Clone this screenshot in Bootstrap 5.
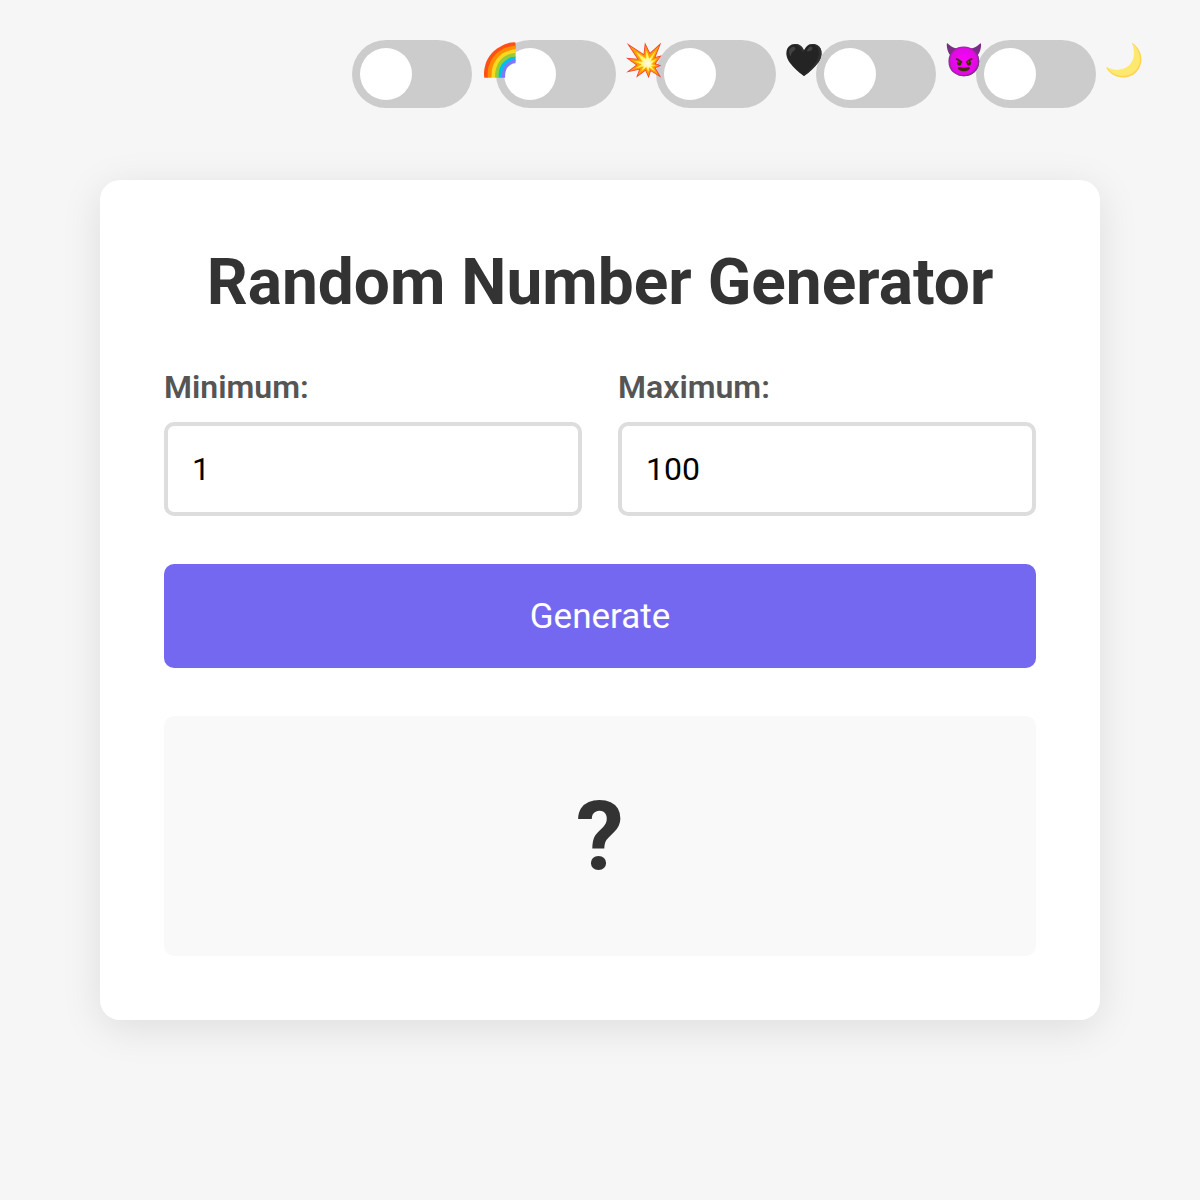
<!DOCTYPE html>
<html lang="en">
	<head>
		<meta charset="UTF-8" />
		<meta name="viewport" content="width=device-width, initial-scale=1.0" />
		<title>Random Number Generator</title>
		<link href="https://cdn.jsdelivr.net/npm/bootstrap@5.3.3/dist/css/bootstrap.min.css" rel="stylesheet" />
		<style>
			body {
				background-color: #f6f6f6;
				font-family: Roboto, "Liberation Sans", sans-serif;
				min-height: 1200px;
			}
			.theme-bar {
				padding: 40px 104px 72px 0;
				gap: 40px;
			}
			.theme-item {
				position: relative;
				width: 120px;
				height: 68px;
				border-radius: 34px;
				background-color: #ccc;
			}
			.theme-item.first-item {
				margin-right: -16px;
			}
			.theme-knob {
				width: 52px;
				height: 52px;
				margin: 8px;
				border-radius: 50%;
				background-color: #fff;
			}
			.theme-emoji {
				position: absolute;
				left: 128px;
				top: -5px;
				font-size: 32px;
				line-height: 50px;
				z-index: 1;
			}
			.emoji-heart {
				filter: brightness(0.55);
			}
			.emoji-moon {
				filter: saturate(0.65) brightness(1.15);
			}
			.gen-card {
				width: 1000px;
				padding: 64px;
				margin: 0 auto;
				background-color: #fff;
				border-radius: 20px;
				box-shadow: 0 8px 40px rgba(0, 0, 0, 0.1);
			}
			.gen-title {
				font-size: 64px;
				font-weight: 700;
				line-height: 76px;
				padding-top: 1px;
				color: #333;
				margin-bottom: 47px;
			}
			.gen-label {
				font-size: 32px;
				font-weight: 600;
				line-height: 38px;
				color: #555;
				margin-bottom: 16px;
				display: block;
			}
			.gen-input {
				height: 94px;
				padding: 0 24px;
				font-size: 32px;
				color: #000;
				border: 4px solid #ddd;
				border-radius: 10px;
			}
			.gen-btn {
				height: 104px;
				padding-top: 8px;
				font-size: 35px;
				color: #fff;
				background-color: #7468f0;
				border: 0;
				border-radius: 10px;
			}
			.gen-result {
				height: 240px;
				font-size: 96px;
				font-weight: 700;
				color: #333;
				background-color: #f9f9f9;
				border-radius: 10px;
			}
		</style>
	</head>
	<body>
		<div class="theme-bar d-flex justify-content-end">
			<div class="theme-item first-item"><div class="theme-knob"></div><span class="theme-emoji">🌈</span></div>
			<div class="theme-item"><div class="theme-knob"></div><span class="theme-emoji">💥</span></div>
			<div class="theme-item"><div class="theme-knob"></div><span class="theme-emoji emoji-heart">🖤</span></div>
			<div class="theme-item"><div class="theme-knob"></div><span class="theme-emoji">😈</span></div>
			<div class="theme-item"><div class="theme-knob"></div><span class="theme-emoji emoji-moon">🌙</span></div>
		</div>

		<main class="gen-card">
			<h1 class="gen-title text-center">Random Number Generator</h1>
			<div class="d-flex mb-5" style="gap: 36px">
				<div class="flex-fill w-50">
					<label class="gen-label" for="minVal">Minimum:</label>
					<input class="form-control gen-input" id="minVal" type="number" value="1" />
				</div>
				<div class="flex-fill w-50">
					<label class="gen-label" for="maxVal">Maximum:</label>
					<input class="form-control gen-input" id="maxVal" type="number" value="100" />
				</div>
			</div>
			<button class="btn gen-btn w-100 mb-5" type="button">Generate</button>
			<div class="gen-result d-flex align-items-center justify-content-center">?</div>
		</main>

		<script src="https://cdn.jsdelivr.net/npm/bootstrap@5.3.3/dist/js/bootstrap.bundle.min.js"></script>
	</body>
</html>
